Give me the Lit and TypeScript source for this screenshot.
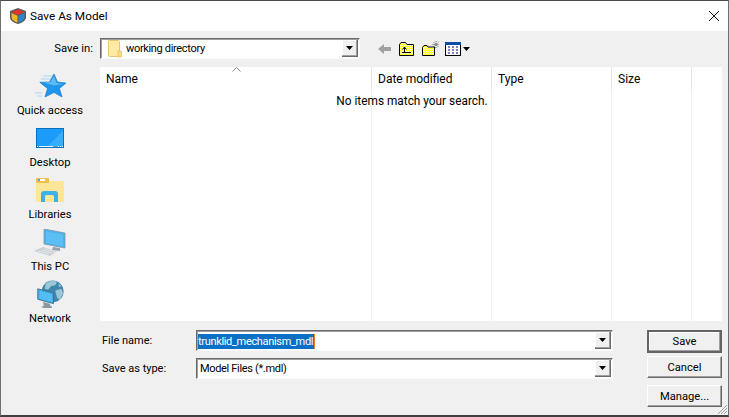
import { LitElement, html, css, svg } from "lit";
import { customElement } from "lit/decorators.js";

const dither = svg`<defs>
  <pattern id="dy" width="2" height="2" patternUnits="userSpaceOnUse"><rect width="2" height="2" fill="#ffff00"/><rect width="1" height="1" fill="#ffffc8"/><rect x="1" y="1" width="1" height="1" fill="#ffffc8"/></pattern>
</defs>`;
const star = svg`<svg width="32" height="24" viewBox="0 0 32 24">
  <g stroke="#a9d8f5" stroke-width="1"><path d="M9 2h10M7 5h10M5 8h8M1 19h7M3 22h5"/></g>
  <path d="M20 0l3.500 8 8.500 1-6.500 5.500L28 23l-8-4.500L11 23l2.500-8.500L6 8.500l9.500-.5z" fill="#1e96ec" stroke="#0f73c4" stroke-width=".6"/>
  <path d="M20 2l2.500 7 7 1-10 1.500-10-3 7-.5z" fill="#5cbaf5"/></svg>`;
const desktop = svg`<svg width="28" height="20" viewBox="0 0 28 20">
  <rect x=".5" y=".5" width="27" height="19" fill="#1a9cf8" stroke="#0b6fb8"/>
  <path d="M11 19L27 3v16z" fill="#38aefb"/><path d="M1 18.500h1M3 18.500h14M22 18.500h1M24 18.500h1M26 18.500h1" stroke="#e8f6ff"/></svg>`;
const libs = svg`<svg width="28" height="24" viewBox="0 0 28 24">
  <rect x="0" y="0" width="13" height="5" rx="1" fill="#efc14a"/>
  <rect x="2" y="1" width="7" height="2" fill="#fff"/><rect x="2" y="1" width="2" height="2" fill="#4aa6e0"/>
  <rect x="0" y="3" width="28" height="21" fill="#fde698"/><rect x="0" y="3" width="13" height="2" fill="#efc14a"/>
  <path d="M5 24V16q0-3 3-3h11q3 0 3 3v8h-4v-5q0-2-2-2h-6q-1 0-1 2v5z" fill="#3eb0ea"/></svg>`;
const pc = svg`<svg width="32" height="27" viewBox="0 0 32 27">
  <path d="M10 0l21 4v15l-21-4z" fill="#4db2ec" stroke="#7c97a8" stroke-width=".8"/>
  <path d="M12 2.500l17 3v11.500l-17-3z" fill="#63c4f6" opacity=".7"/>
  <path d="M19 18l7 1v3l-8-1z" fill="#98a2aa"/>
  <path d="M0 22l9-4 14 4-7 5z" fill="#c9cfd3"/>
  <g stroke="#eef1f3" stroke-width=".7"><path d="M4 22l11 3M7 21l11 3M10 19.600l11 3"/></g></svg>`;
const net = svg`<svg width="28" height="28" viewBox="0 0 32 32">
  <circle cx="19" cy="13" r="12.500" fill="#3f86ad"/>
  <path d="M11 4q6-5 13-2l-2 4-5 1-3 4-4-1zM22 12l7-2 2 5-4 8-3-3zM26 4l3 3-3 1z" fill="#9cc6d8"/>
  <path d="M2 10l18 5v12L2 22z" fill="#40adec" stroke="#3d6f8c" stroke-width="1"/>
  <path d="M4 12l14 4v9L4 21z" fill="#55bdf5"/>
  <path d="M8 25l8 2v2l2 1v2H8l-2-2h3z" fill="#8c979e"/></svg>`;
const logo = svg`<svg width="18" height="18" viewBox="0 0 18 18">
  <path d="M9 1l8 3v7q-1 4-8 6-7-2-8-6V4z" fill="#565c62"/>
  <path d="M9 2.500L15.800 5 9 8 2.200 5z" fill="#e43428"/>
  <path d="M2.500 6L8.500 8.800V15.500Q3.500 14 2.500 10.500z" fill="#f2b71e"/>
  <path d="M9.500 8.800L15.500 6V10.500Q14.500 14 9.500 15.500z" fill="#2a86cf"/></svg>`;
const folder = svg`<svg width="14" height="18" viewBox="0 0 14 18">
  <rect x=".5" y=".5" width="11" height="16" rx="1" fill="#ffe9a3" stroke="#e6c670"/>
  <rect x="10" y="11" width="3.500" height="6" fill="#fbdb7e" stroke="#e3bd5f" stroke-width=".7"/></svg>`;
const backIcon = svg`<svg width="13" height="12" viewBox="0 0 13 12"><path d="M0 6l6-5v3h7v4H6v3z" fill="#a0a0a0"/></svg>`;
const upIcon = svg`<svg width="15" height="14" viewBox="0 0 15 14">${dither}
  <path d="M.5 13.500V2.500L2 .5h4.500l1.500 2h6.500v11z" fill="url(#dy)" stroke="#000"/>
  <path d="M3 10.500h9M5.500 10.500V5.500M3.500 7.500l2-2.500 2 2.500" fill="none" stroke="#000"/></svg>`;
const newIcon = svg`<svg width="17" height="15" viewBox="0 0 17 15">
  <path d="M.5 14.500V6.500L2 4.500h3l1 1.500h6.500v8.500z" fill="url(#dy)" stroke="#000"/>
  <g stroke="#333" stroke-width=".8" stroke-dasharray="1 1"><path d="M14 0v7M10.500 3.500h6.500M11.500 1l5 5M16.500 1l-5 5"/></g></svg>`;
const viewIcon = svg`<svg width="16" height="14" viewBox="0 0 16 14">
  <rect x=".5" y=".5" width="15" height="13" fill="#fff" stroke="#000"/>
  <rect x="0" y="0" width="16" height="3" fill="#0a4ea8"/>
  <g stroke="#00008a"><path d="M3 5h2M7 5h2M11 5h2M3 8h2M7 8h2M11 8h2M3 11h2M7 11h2M11 11h2"/></g></svg>`;
const arrow = svg`<svg width="7" height="4" viewBox="0 0 7 4"><path d="M0 0h7L3.500 4z" fill="#000"/></svg>`;

@customElement("app-root")
export class AppRoot extends LitElement {
  static styles = css`
    :host {
      display: block;
      width: 729px;
      height: 417px;
      overflow: hidden;
      font-family: "Roboto", "Liberation Sans", sans-serif;
      font-size: 12px;
      color: #000;
    }
    .window {
      box-sizing: border-box;
      width: 729px;
      height: 417px;
      position: relative;
      background: #f0f0f0;
      border-top: 1px solid #4a4a4a;
      border-left: 1px solid #707070;
      border-right: 1px solid #707070;
      border-bottom: 2px solid #3f3f3f;
      display: flex;
      flex-direction: column;
    }
    .title {
      height: 30px;
      background: #fff;
      display: flex;
      align-items: center;
      padding-left: 8px;
      flex: none;
    }
    .title .name { margin-left: 3px; font-size: 11.8px; }
    .close { margin-left: auto; margin-right: 8px; display: flex; }
    .toolbar {
      height: 36px;
      flex: none;
      display: flex;
      align-items: flex-start;
      padding-top: 7px;
      box-sizing: border-box;
    }
    .save-in {
      width: 99px;
      box-sizing: border-box;
      text-align: right;
      padding-right: 7px;
      line-height: 21px;
      font-size: 11.3px;
    }
    .combo {
      box-sizing: border-box;
      background: #fff;
      height: 21px;
      display: flex;
      align-items: center;
      border-top: 1px solid #696969;
      border-left: 1px solid #696969;
      border-right: 1px solid #fbfbfb;
      border-bottom: 1px solid #fbfbfb;
      box-shadow: inset 1px 1px 0 #a0a0a0;
      font-size: 11px;
      letter-spacing: -0.33px;
    }
    .combo.top { width: 260px; }
    .combo.wide { width: 417px; }
    .folder { display: flex; margin: 0 4px 0 7px; }
    .drop {
      margin-left: auto;
      width: 16px;
      height: 17px;
      box-sizing: border-box;
      background: #f0f0f0;
      border-right: 1px solid #696969;
      border-bottom: 1px solid #696969;
      box-shadow: inset -1px -1px 0 #a0a0a0, inset 1px 1px 0 #fff;
      display: flex;
      align-items: center;
      justify-content: center;
      margin-right: 1px;
    }
    .tools { display: flex; align-items: center; height: 21px; margin-left: 18px; }
    .tools svg { display: block; }
    .i-up { margin-left: 8px; }
    .i-new { margin-left: 8px; margin-top: -1px; }
    .i-view { margin-left: 6px; }
    .i-arrow { margin-left: 2px; }
    .main { display: flex; height: 254px; flex: none; }
    .sidebar {
      width: 99px;
      flex: none;
      display: flex;
      flex-direction: column;
      align-items: flex-start;
    }
    .place {
      height: 52px;
      display: flex;
      flex-direction: column;
      align-items: center;
      justify-content: flex-end;
      width: 98px;
      line-height: 12px;
      flex: none;
      font-size: 11.2px;
    }
    .place:first-child { height: 50px; }
    .icon { height: 34px; margin-bottom: 2px; display: flex; align-items: center; justify-content: center; flex: none; }
    .icon svg { display: block; }
    .list { width: 622px; background: #fff; flex: none; display: flex; flex-direction: column; position: relative; }
    .head { display: grid; grid-template-columns: 272px 120px 120px 80px 30px; height: 24px; flex: none; }
    .head div { box-sizing: border-box; border-right: 1px solid #e5e5e5; padding-left: 6px; line-height: 24px; position: relative; }
    .head div:last-child { border-right: none; }
    .sort { position: absolute; left: 132px; top: 0; }
    .body { flex: 1; display: grid; grid-template-columns: 272px 120px 120px 80px 30px; }
    .body div { border-right: 1px solid #eff3f8; }
    .body div:last-child { border-right: none; }
    .empty { position: absolute; top: 27px; left: 2px; right: 0; text-align: center; line-height: 14px; font-size: 11.85px; }
    .bottom { display: flex; flex: none; padding-top: 9px; }
    .fields { margin-left: 101px; display: grid; grid-template-columns: 94px 417px; row-gap: 7px; align-items: center; align-self: flex-start; font-size: 11px; }
    .fields label { line-height: 21px; }
    .selected { background: #0a6fc6; color: #fff; margin: 2px 0 0 1px; line-height: 15px; padding-right: 1px; border-right: 1px solid #f08020; white-space: nowrap; }
    .value { margin-left: 3px; white-space: nowrap; }
    .buttons { margin-left: 34px; display: flex; flex-direction: column; width: 75px; font-size: 11.2px; }
    .btn {
      box-sizing: border-box;
      width: 75px;
      height: 22px;
      background: #f0f0f0;
      display: flex;
      align-items: center;
      justify-content: center;
      border-top: 1px solid #fff;
      border-left: 1px solid #fff;
      border-right: 1px solid #696969;
      border-bottom: 1px solid #696969;
      box-shadow: inset -1px -1px 0 #a0a0a0;
    }
    .btn.def { border: 2px solid #646464; height: 23px; box-shadow: inset -1px -1px 0 #a0a0a0, inset 1px 1px 0 #fff; }
    .btn.c { margin-top: 3px; }
    .btn.m { margin-top: 7px; }
    .grip { position: absolute; right: 0; bottom: 0; display: block; }
  `;

  render() {
    const place = (icon: unknown, label: string) => html`<div class="place"><div class="icon">${icon}</div><span>${label}</span></div>`;
    return html`<div class="window">
      <div class="title">
        ${logo}<span class="name">Save As Model</span>
        <span class="close"><svg width="12" height="12" viewBox="0 0 12 12"><path d="M1 1l10 10M11 1L1 11" stroke="#111" stroke-width="1" fill="none"/></svg></span>
      </div>
      <div class="toolbar">
        <div class="save-in">Save in:</div>
        <div class="combo top">
          <span class="folder">${folder}</span><span>working directory</span>
          <span class="drop">${arrow}</span>
        </div>
        <div class="tools">
          <span>${backIcon}</span><span class="i-up">${upIcon}</span><span class="i-new">${newIcon}</span><span class="i-view">${viewIcon}</span><span class="i-arrow">${arrow}</span>
        </div>
      </div>
      <div class="main">
        <div class="sidebar">
          ${place(star, "Quick access")}${place(desktop, "Desktop")}${place(libs, "Libraries")}${place(pc, "This PC")}${place(net, "Network")}
        </div>
        <div class="list">
          <div class="head">
            <div>Name<svg class="sort" width="9" height="5" viewBox="0 0 9 5"><path d="M.5 4.500l4-4 4 4" fill="none" stroke="#888"/></svg></div>
            <div>Date modified</div><div>Type</div><div>Size</div><div></div>
          </div>
          <div class="body"><div></div><div></div><div></div><div></div><div></div></div>
          <div class="empty">No items match your search.</div>
        </div>
      </div>
      <div class="bottom">
        <div class="fields">
          <label>File name:</label>
          <div class="combo wide"><span class="selected">trunklid_mechanism_mdl</span><span class="drop">${arrow}</span></div>
          <label>Save as type:</label>
          <div class="combo wide"><span class="value">Model Files (*.mdl)</span><span class="drop">${arrow}</span></div>
        </div>
        <div class="buttons">
          <div class="btn def">Save</div>
          <div class="btn c">Cancel</div>
          <div class="btn m">Manage...</div>
        </div>
      </div>
      <svg class="grip" width="12" height="12" viewBox="0 0 12 12"><path d="M11 2L2 11M11 5L5 11M11 8L8 11" stroke="#a0a0a0" fill="none"/></svg>
    </div>`;
  }
}
